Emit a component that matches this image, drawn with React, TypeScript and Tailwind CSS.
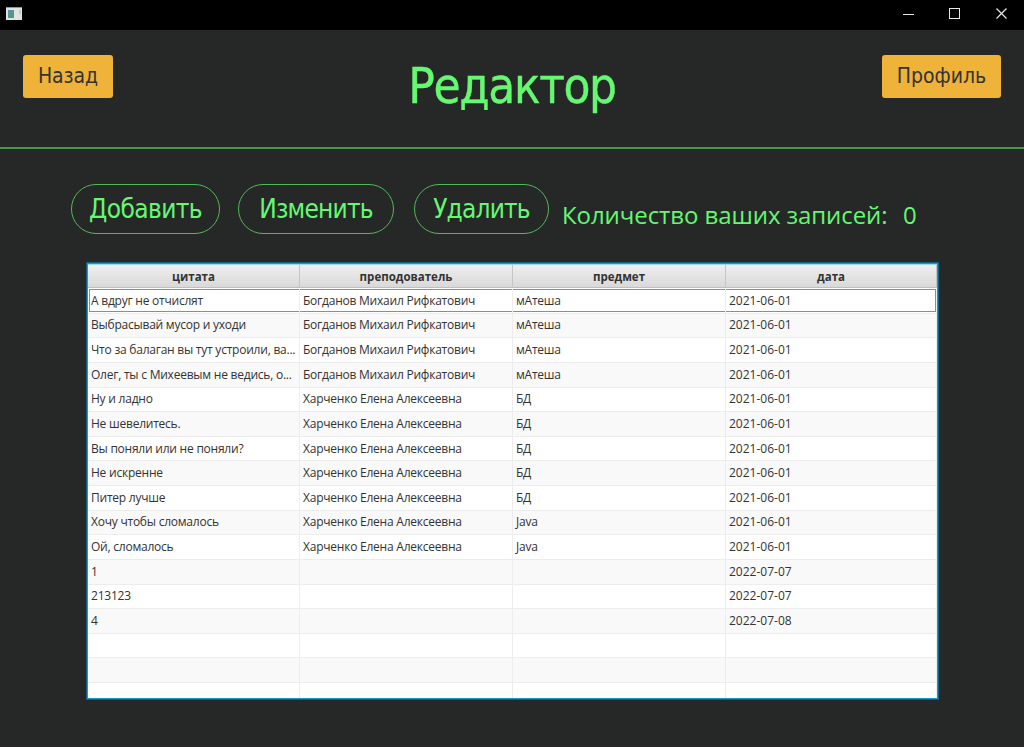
const BOGDANOV = 'Богданов Михаил Рифкатович';
const KHARCHENKO = 'Харченко Елена Алексеевна';

const columns = ['цитата', 'преподователь', 'предмет', 'дата'];

const records: string[][] = [
  ['А вдруг не отчислят', BOGDANOV, 'мАтеша', '2021-06-01'],
  ['Выбрасывай мусор и уходи', BOGDANOV, 'мАтеша', '2021-06-01'],
  ['Что за балаган вы тут устроили, ва...', BOGDANOV, 'мАтеша', '2021-06-01'],
  ['Олег, ты с Михеевым не ведись, о...', BOGDANOV, 'мАтеша', '2021-06-01'],
  ['Ну и ладно', KHARCHENKO, 'БД', '2021-06-01'],
  ['Не шевелитесь.', KHARCHENKO, 'БД', '2021-06-01'],
  ['Вы поняли или не поняли?', KHARCHENKO, 'БД', '2021-06-01'],
  ['Не искренне', KHARCHENKO, 'БД', '2021-06-01'],
  ['Питер лучше', KHARCHENKO, 'БД', '2021-06-01'],
  ['Хочу чтобы сломалось', KHARCHENKO, 'Java', '2021-06-01'],
  ['Ой, сломалось', KHARCHENKO, 'Java', '2021-06-01'],
  ['1', '', '', '2022-07-07'],
  ['213123', '', '', '2022-07-07'],
  ['4', '', '', '2022-07-08'],
  ['', '', '', ''],
  ['', '', '', ''],
  ['', '', '', ''],
];

function TitleBar() {
  return (
    <div className="flex h-[30px] shrink-0 items-start justify-between bg-black">
      <svg className="mt-[7px] ml-[6px]" width="16" height="13" viewBox="0 0 16 13">
        <rect width="16" height="13" fill="#dfe3e4" />
        <rect width="16" height="1" fill="#8d9598" />
        <rect x="2" y="3" width="6" height="8" fill="#5c8fae" />
        <rect x="3" y="5" width="4" height="6" fill="#4c9c84" />
        <rect x="9" y="3" width="3" height="8" fill="#e8e4e6" />
        <rect x="13" y="3" width="2" height="4" fill="#b4d4c8" />
      </svg>
      <div className="flex text-[#e8e8e8]">
        <svg className="mt-2 mr-[35px]" width="11" height="12" viewBox="0 0 11 12" stroke="currentColor">
          <path d="M0 6.5h11" />
        </svg>
        <svg className="mt-2 mr-[36px]" width="11" height="12" viewBox="0 0 11 12" fill="none" stroke="currentColor">
          <rect x="0.5" y="0.5" width="10" height="10" />
        </svg>
        <svg className="mt-2 mr-[17px]" width="11" height="12" viewBox="0 0 11 12" stroke="currentColor" strokeWidth="1.2">
          <path d="M0.5 0.5l10 10M10.5 0.5l-10 10" />
        </svg>
      </div>
    </div>
  );
}

const tahoma = "font-['DejaVu_Sans_Condensed','DejaVu_Sans',sans-serif]";
const segoe = "font-['Open_Sans','Noto_Sans',sans-serif]";

function Table() {
  return (
    <div className={`${segoe} ml-[86px] mt-[28px] h-[438px] w-[853px] border border-[#0b6284] text-[12px] text-[#333333]`}>
      <div className="flex h-full flex-col overflow-hidden border border-[#1a97c4] bg-white">
        <div className="mb-px grid h-[24px] shrink-0 grid-cols-[212px_213px_213px_211px] border-t border-b border-t-[#9fd8ee] border-b-[#bfbfbf] bg-linear-to-b from-[#efefef] to-[#d9d9d9]">
          {columns.map((name) => (
            <div key={name} className="flex items-center justify-center border-r border-[#c4c4c4] pt-px text-[11.5px] font-bold">
              <span>{name}</span>
            </div>
          ))}
        </div>
        {records.map((record, i) => (
          <div
            key={i}
            className={`relative grid h-[24.63px] shrink-0 grid-cols-[212px_213px_213px_211px] border-b border-[#ededed] ${i % 2 ? 'bg-[#f9f9f9]' : 'bg-white'}`}
          >
            {i === 0 && (
              <div className="absolute top-0 left-px h-[23px] w-[847px] border border-[#3ba9d8]" />
            )}
            {record.map((value, j) => (
              <div
                key={j}
                className={`relative flex items-center border-r border-[#ededed] pl-[3px] whitespace-nowrap ${j < 3 ? 'tracking-[-0.23px]' : ''}`}
              >
                <span>{value}</span>
              </div>
            ))}
          </div>
        ))}
      </div>
    </div>
  );
}

export default function App() {
  return (
    <div className={`${tahoma} flex h-[747px] w-[1024px] flex-col overflow-hidden bg-[#262827]`}>
      <TitleBar />
      <header className="flex h-[119px] shrink-0 items-start justify-between border-b-2 border-[#43984b] px-[23px] pt-[25px]">
        <div className="flex w-[119px]">
          <button className="h-[43px] w-[90px] rounded-[3px] bg-[#efb33a] text-[21px] tracking-[-0.1px] text-[#333333]">Назад</button>
        </div>
        <h1 className="mt-[2px] text-[49px] leading-[60px] tracking-[-1.4px] text-[#65f871] [-webkit-text-stroke:0.4px]">Редактор</h1>
        <button className="h-[43px] w-[119px] rounded-[3px] bg-[#efb33a] text-[21px] text-[#333333]">Профиль</button>
      </header>
      <div className="mt-[35px] ml-[71px] flex h-[50px] shrink-0 text-[#65f871]">
        <button className="h-[50px] w-[149px] rounded-full border border-[#52b85b] text-[26px] tracking-[-0.6px]">Добавить</button>
        <button className="ml-[18px] h-[50px] w-[156px] rounded-full border border-[#52b85b] text-[26px] tracking-[-0.8px]">Изменить</button>
        <button className="ml-[20px] h-[50px] w-[135px] rounded-full border border-[#52b85b] text-[26px] tracking-[-0.8px]">Удалить</button>
        <div className={`${segoe} ml-[13px] flex pt-[13px] text-[24px] leading-[36px] whitespace-nowrap`}>
          <span className="w-[341px] tracking-[-0.08px]">Количество ваших записей:</span>
          <span>0</span>
        </div>
      </div>
      <Table />
    </div>
  );
}
